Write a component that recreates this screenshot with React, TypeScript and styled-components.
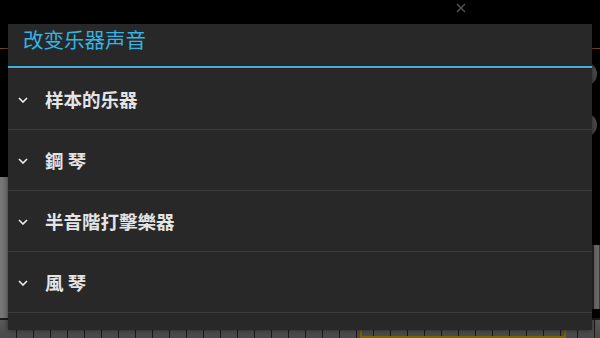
import React from 'react'
import styled, { createGlobalStyle } from 'styled-components'

const GlobalStyle = createGlobalStyle`
  html, body {
    margin: 0;
    padding: 0;
    background: #000;
  }
  body {
    font-family: 'Noto Sans CJK SC', 'Noto Sans', sans-serif;
  }
`

const Screen = styled.div`
  position: relative;
  width: 600px;
  height: 338px;
  overflow: hidden;
  display: flex;
  flex-flow: column nowrap;
  background: #000;
`

const TopPanel = styled.div`
  height: 177px;
  display: flex;
  flex-flow: column nowrap;
  background: #000;
`

const CloseRow = styled.div`
  height: 24px;
  display: flex;
  justify-content: flex-end;
  padding: 3px 134px 0 0;
  box-sizing: border-box;
`

const OrangeRule = styled.div`
  height: 1px;
  margin-top: 24px;
  background: #7a4410;
`

const KnobColumn = styled.div`
  display: flex;
  flex-flow: column nowrap;
  align-items: flex-end;
  gap: 27px;
  margin: 13px 3px 0 0;
`

const Knob = styled.div`
  width: 24px;
  height: 24px;
  border-radius: 50%;
  background: radial-gradient(circle at 40% 40%, #6a6a6a, #3a3a3a);
`

const MiddleBand = styled.div`
  height: 141px;
  display: flex;
  flex-flow: row nowrap;
`

const GreyPanel = styled.div`
  flex: 1;
  background: linear-gradient(90deg, #777 0%, #5e5e5e 100%);
`

const SliderColumn = styled.div`
  width: 8px;
  display: flex;
  flex-flow: column nowrap;
  background: #000;
  padding-top: 68px;
  box-sizing: border-box;
`

const SliderTrack = styled.div`
  height: 64px;
  background: #6a6a6a;
  border-left: 2px solid #2a2a2a;
  border-right: 1px solid #3a3a3a;
`

const Keyboard = styled.div`
  position: relative;
  flex: 1;
  display: flex;
  flex-flow: row nowrap;
  background: #1c1c1c;
  padding-top: 2px;
  box-sizing: border-box;
`

const Key = styled.div`
  width: 16px;
  flex: none;
  margin-right: 1px;
  background: linear-gradient(180deg, #5a5a5a, #4a4a4a);
`

const KeyHighlight = styled.div`
  position: absolute;
  left: 360px;
  top: 0;
  width: 202px;
  bottom: 0;
  border: 2px solid #7a6600;
  border-top: none;
`

const Dialog = styled.div`
  position: absolute;
  left: 8px;
  top: 24px;
  width: 584px;
  height: 306px;
  background: #282828;
  display: flex;
  flex-flow: column nowrap;
  box-shadow: 0 0 6px rgba(0, 0, 0, 0.6);
`

const DialogTitle = styled.div`
  height: 44px;
  box-sizing: border-box;
  padding: 2px 0 0 15px;
  font-size: 20.5px;
  line-height: 26px;
  color: #33b5e5;
  border-bottom: 2px solid #33b5e5;
`

const TitleShadow = styled.div`
  height: 1px;
  background: #3a1c14;
`

const List = styled.div`
  display: flex;
  flex-flow: column nowrap;
`

const Row = styled.div`
  height: 60px;
  display: flex;
  flex-flow: row nowrap;
  align-items: center;
  padding-left: 10px;
  border-bottom: 1px solid #3c3c3c;
  box-sizing: content-box;
`

const Chevron = styled.svg`
  width: 10px;
  height: 6px;
  flex: none;
  margin-right: 17px;
  margin-top: 1px;
`

const RowLabel = styled.div`
  font-size: 18.5px;
  font-weight: 700;
  line-height: 24px;
  color: #e4e4e4;
  white-space: pre;
`

const items = ['样本的乐器', '鋼 琴', '半音階打擊樂器', '風 琴']

const App = () => {
  return (
    <>
      <GlobalStyle />
      <Screen>
        <TopPanel>
          <CloseRow>
            <svg width="10" height="10" viewBox="0 0 10 10">
              <path d="M1 1 L9 9 M9 1 L1 9" stroke="#555" strokeWidth="1.4" />
            </svg>
          </CloseRow>
          <OrangeRule />
          <KnobColumn>
            <Knob />
            <Knob />
          </KnobColumn>
        </TopPanel>
        <MiddleBand>
          <GreyPanel />
          <SliderColumn>
            <SliderTrack />
          </SliderColumn>
        </MiddleBand>
        <Keyboard>
          {Array.from({ length: 36 }).map((_, i) => (
            <Key key={i} />
          ))}
          <KeyHighlight />
        </Keyboard>
        <Dialog>
          <DialogTitle>改变乐器声音</DialogTitle>
          <TitleShadow />
          <List>
            {items.map((label, index) => (
              <Row key={index}>
                <Chevron viewBox="0 0 10 6">
                  <polyline points="1,1 5,5 9,1" fill="none" stroke="#f0f0f0" strokeWidth="1.6" />
                </Chevron>
                <RowLabel>{label}</RowLabel>
              </Row>
            ))}
          </List>
        </Dialog>
      </Screen>
    </>
  )
}

export default App
